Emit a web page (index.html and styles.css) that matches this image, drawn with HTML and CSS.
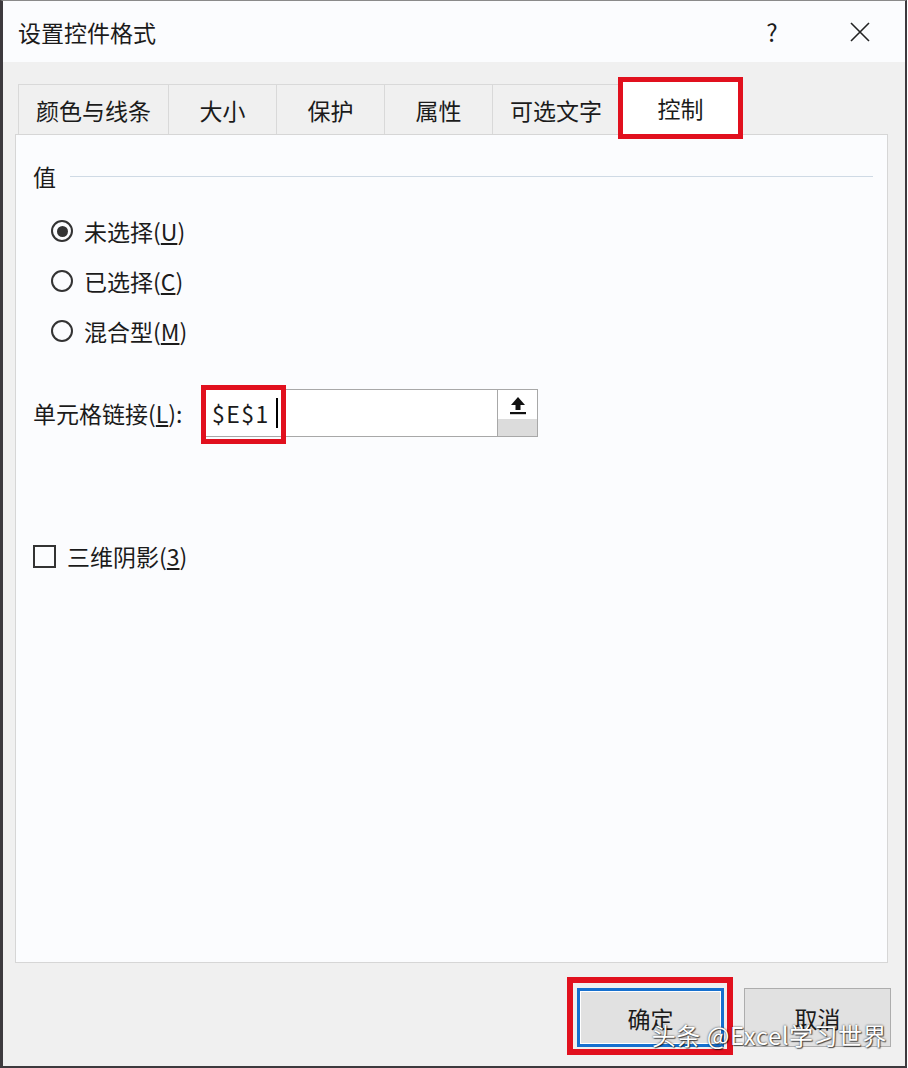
FILE: index.html
```html
<!DOCTYPE html>
<html lang="zh-CN">
<head>
    <meta charset="UTF-8" />
    <title>设置控件格式</title>
    <link rel="stylesheet" href="styles.css">
</head>
<body>
    <div class="window">
        <div class="titlebar">
            <span class="title">设置控件格式</span>
            <span class="help">?</span>
            <span class="close">
                <svg width="22" height="22" viewBox="0 0 22 22"><path d="M2 2 L20 20 M20 2 L2 20" stroke="#222" stroke-width="1.6" fill="none"/></svg>
            </span>
        </div>

        <div class="client">
            <div class="tabs">
                <div class="tab t1">颜色与线条</div>
                <div class="tab t2">大小</div>
                <div class="tab t2">保护</div>
                <div class="tab t2">属性</div>
                <div class="tab t5">可选文字</div>
                <div class="tab active">控制</div>
            </div>

            <div class="panel">
                <div class="group-head">
                    <span>值</span>
                    <i class="rule"></i>
                </div>

                <div class="radios">
                    <div class="radio checked"><span class="dot"></span>未选择(<u>U</u>)</div>
                    <div class="radio"><span class="dot"></span>已选择(<u>C</u>)</div>
                    <div class="radio"><span class="dot"></span>混合型(<u>M</u>)</div>
                </div>

                <div class="link-row">
                    <span class="link-label">单元格链接(<u>L</u>):</span>
                    <div class="ref-box">
                        <span class="ref-text">$E$1<i class="caret"></i></span>
                        <span class="ref-btn">
                            <svg width="18" height="20" viewBox="0 0 18 20"><path d="M9 1 L16 9 H11.5 V14 H6.5 V9 H2 Z" fill="#111"/><rect x="1" y="16" width="16" height="2.2" fill="#111"/></svg>
                        </span>
                    </div>
                </div>

                <div class="check"><span class="box"></span>三维阴影(<u>3</u>)</div>
            </div>

            <div class="actions">
                <div class="mark">
                    <button class="btn default">确定</button>
                </div>
                <button class="btn">取消</button>
            </div>
        </div>

        <div class="watermark">头条 @Excel学习世界</div>
    </div>
</body>
</html>
```

FILE: styles.css
```css
body {
    margin: 0;
    background: #fff;
    font-family: "Noto Sans CJK SC", "Liberation Sans", sans-serif;
    color: #1b1b1b;
}
.window {
    position: relative;
    width: 907px;
    height: 1068px;
    box-sizing: border-box;
    border: 2px solid #3d3a3e;
    border-left-width: 3px;
    border-top: 1px solid #8a8a8a;
    background: #f0f0f0;
    display: flex;
    flex-direction: column;
}
.titlebar {
    height: 61px;
    background: #fbfcfe;
    display: flex;
    align-items: center;
    padding-left: 15px;
    font-size: 23px;
}
.title {
    flex: 1;
}
.help {
    width: 20px;
    text-align: center;
    margin-right: 63px;
    font-size: 24px;
}
.close {
    width: 30px;
    height: 30px;
    margin-right: 30px;
    display: flex;
    align-items: center;
    justify-content: center;
}

.client {
    flex: 1;
    padding: 0 17px 0 12px;
}
.tabs {
    display: flex;
    align-items: flex-end;
    margin: 15px 0 0 3px;
}
.tab {
    box-sizing: border-box;
    height: 50px;
    border-top: 1px solid #d9d9d9;
    border-left: 1px solid #d9d9d9;
    display: flex;
    align-items: center;
    justify-content: center;
    font-size: 23px;
}
.t1 { width: 150px; }
.t2 { width: 108px; }
.t5 { width: 128px; border-right: 1px solid #d9d9d9; }
.tab.active {
    position: relative;
    z-index: 1;
    width: 125px;
    height: 62px;
    margin: 0 0 -5px -2px;
    border: 5px solid #e1101e;
    background: #fff;
}

.panel {
    height: 829px;
    box-sizing: border-box;
    border: 1px solid #d6d6d6;
    background: #fbfcfe;
    padding: 26px 14px 0 17px;
}
.group-head {
    display: flex;
    align-items: center;
    height: 30px;
    font-size: 23px;
}
.rule {
    flex: 1;
    height: 1px;
    background: #cfdae5;
    margin-left: 14px;
}
.radios {
    margin-top: 15px;
}
.radio {
    height: 50px;
    display: flex;
    align-items: center;
    padding-left: 18px;
    font-size: 23px;
}
.dot {
    width: 22px;
    height: 22px;
    box-sizing: border-box;
    border: 2px solid #333;
    border-radius: 50%;
    margin-right: 11px;
    display: flex;
    align-items: center;
    justify-content: center;
}
.radio.checked .dot::after {
    content: "";
    width: 11px;
    height: 11px;
    border-radius: 50%;
    background: #333;
}

.link-row {
    margin-top: 33px;
    height: 48px;
    display: flex;
    align-items: center;
    font-size: 23px;
}
.link-label {
    width: 154px;
    margin-right: 18px;
    white-space: nowrap;
}
.ref-box {
    position: relative;
    width: 333px;
    height: 48px;
    box-sizing: border-box;
    border: 1px solid #a8a8a8;
    background: #fff;
    display: flex;
    align-items: center;
}
.ref-box::before {
    content: "";
    position: absolute;
    left: -5px;
    top: -5px;
    width: 85px;
    height: 59px;
    box-sizing: border-box;
    border: 5px solid #e1101e;
}
.ref-text {
    padding-left: 6px;
    letter-spacing: 1.5px;
    display: flex;
    align-items: center;
}
.caret {
    width: 2px;
    height: 30px;
    background: #000;
    margin-left: 6px;
}
.ref-btn {
    margin-left: auto;
    align-self: stretch;
    width: 40px;
    border-left: 1px solid #a8a8a8;
    background: linear-gradient(#fff 0 64%, #dcdcdc 64%);
    display: flex;
    justify-content: center;
    padding-top: 6px;
    box-sizing: border-box;
}

.check {
    margin-top: 104px;
    height: 30px;
    display: flex;
    align-items: center;
    font-size: 23px;
}
.box {
    width: 23px;
    height: 23px;
    box-sizing: border-box;
    border: 2px solid #333;
    margin-right: 11px;
}

.actions {
    display: flex;
    justify-content: flex-end;
    gap: 20px;
    margin: 25px -3px 0 0;
}
.btn {
    width: 147px;
    height: 59px;
    box-sizing: border-box;
    background: #e1e1e1;
    border: 1px solid #adadad;
    font-family: inherit;
    font-size: 23px;
    color: #1b1b1b;
    padding: 0;
}
.btn.default {
    border: 3px solid #1670cf;
    box-shadow: inset 0 0 0 1px #fff;
}
.mark {
    position: relative;
    display: flex;
}
.mark::after {
    content: "";
    position: absolute;
    left: -10px;
    top: -11px;
    right: -9px;
    bottom: -8px;
    border: 6px solid #e1101e;
}

.watermark {
    position: absolute;
    right: 18px;
    bottom: 16px;
    font-size: 24px;
    line-height: 30px;
    letter-spacing: 0.5px;
    color: #fff;
    text-shadow: 0 0 2px rgba(0, 0, 0, 0.8), 1px 1px 1px rgba(0, 0, 0, 0.6);
}
```
